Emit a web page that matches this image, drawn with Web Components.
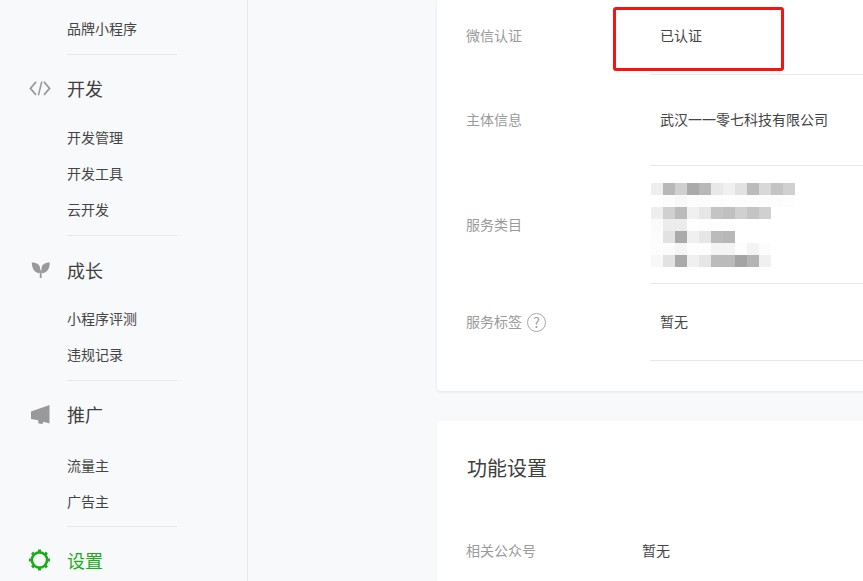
<!DOCTYPE html>
<html lang="zh">
<head>
<meta charset="utf-8">
<title>设置</title>
<style>
  html, body { margin: 0; height: 581px; overflow: hidden; background: #f8f9fb; }
  body {
    display: flex;
    font-family: "Noto Sans CJK SC", "Liberation Sans", sans-serif;
    font-size: 14px;
    color: #353535;
  }
</style>
</head>
<body>
  <side-nav>
    <nav-group top="10" pad="8">
      <nav-item>品牌小程序</nav-item>
    </nav-group>
    <nav-group title="开发" head="66" gap="-2" pad="8">
      <svg slot="icon" width="24" height="24" viewBox="0 0 24 24" fill="none" stroke="#999" stroke-width="1.7"><path d="M8 5.900 2.400 12.400 8 18.900M16 5.900l5.600 6.500-5.600 6.500"/><path d="M13.800 5.500 10.400 19.300" stroke-width="1.500"/></svg>
      <nav-item>开发管理</nav-item>
      <nav-item>开发工具</nav-item>
      <nav-item>云开发</nav-item>
    </nav-group>
    <nav-group title="成长" head="68" gap="-4" pad="8">
      <svg slot="icon" width="24" height="24" viewBox="0 0 24 24" fill="#999"><path d="M3.800 4.500c5.400 0 8.400 2.600 8.400 7 0 1.500-.3 2.800-.6 3.700C6.800 14.800 4 11.300 3.800 4.500z"/><path d="M21.800 4.500c-5.400 0-8.400 2.600-8.400 7 0 1.500.3 2.800.6 3.700 4.800-.4 7.600-3.900 7.800-10.700z"/><rect x="11.800" y="12" width="1.800" height="8"/></svg>
      <nav-item>小程序评测</nav-item>
      <nav-item>违规记录</nav-item>
    </nav-group>
    <nav-group title="推广" head="66" gap="0" pad="7">
      <svg slot="icon" width="24" height="24" viewBox="0 0 24 24" fill="#999"><path d="M3 9.500 21.500 3v18.500l-6-1.700-1 2.200-4-.6-.4-3.100L3 17z"/></svg>
      <nav-item>流量主</nav-item>
      <nav-item>广告主</nav-item>
    </nav-group>
    <nav-group title="设置" head="66" active last>
      <svg slot="icon" width="24" height="24" viewBox="0 0 24 24" fill="#1aad19">
        <circle cx="11.500" cy="12" r="7.600" fill="none" stroke="#1aad19" stroke-width="2.600"/>
        <rect x="10" y="1.500" width="3" height="3"/>
        <rect x="10" y="19.500" width="3" height="3"/>
        <rect x="1" y="10.500" width="3" height="3"/>
        <rect x="19" y="10.500" width="3" height="3"/>
        <rect x="10" y="1.500" width="3" height="3" transform="rotate(45 11.500 12)"/>
        <rect x="10" y="1.500" width="3" height="3" transform="rotate(135 11.500 12)"/>
        <rect x="10" y="1.500" width="3" height="3" transform="rotate(225 11.500 12)"/>
        <rect x="10" y="1.500" width="3" height="3" transform="rotate(315 11.500 12)"/>
      </svg>
    </nav-group>
  </side-nav>

  <main-pane>
    <info-card>
      <info-row label="微信认证" height="75" nudge="4" label-nudge="6">已认证</info-row>
      <info-row label="主体信息" height="91" nudge="2" label-nudge="4">武汉一一零七科技有限公司</info-row>
      <info-row label="服务类目" height="118" label-nudge="2"><mosaic-block></mosaic-block></info-row>
      <info-row label="服务标签" height="77" nudge="3" label-nudge="3" help>暂无</info-row>
    </info-card>
    <settings-card heading="功能设置">
      <plain-row label="相关公众号">暂无</plain-row>
    </settings-card>
    <red-mark></red-mark>
  </main-pane>

<script>
function shadow(el, html) {
  el.attachShadow({ mode: 'open' }).innerHTML = html;
}

customElements.define('side-nav', class extends HTMLElement {
  connectedCallback() {
    if (this.shadowRoot) return;
    shadow(this, `<style>
      :host { display: block; flex: none; width: 247px; height: 581px; overflow: hidden;
        border-right: 1px solid #e7e8ec; background: #f8f9fb; }
    </style><slot></slot>`);
  }
});

customElements.define('nav-group', class extends HTMLElement {
  connectedCallback() {
    if (this.shadowRoot) return;
    var title = this.getAttribute('title');
    this.removeAttribute('title');
    var gap = this.getAttribute('gap') || 0;
    var top = this.getAttribute('top') || 0;
    var pad = this.getAttribute('pad') || 0;
    var headH = this.getAttribute('head') || 66;
    var head = title ? `<div class="head"><span class="icon"><slot name="icon"></slot></span><span>${title}</span></div>` : '';
    shadow(this, `<style>
      :host { display: block; padding-left: 67px; }
      .head { display: flex; align-items: center; height: ${headH}px; margin-bottom: ${gap}px;
        font-size: 18px; color: #3e3e3e; position: relative; }
      .icon { position: absolute; left: -39px; top: calc(50% - 12px); width: 24px; height: 24px; }
      .list { width: 110px; padding: ${top}px 0 ${pad}px; border-bottom: 1px solid #e7e8ec; }
      :host([last]) .list { border: 0; padding: 0; }
      :host([active]) .head { color: #1aad19; }
      ::slotted(svg) { display: block; }
    </style>${head}<div class="list"><slot></slot></div>`);
  }
});

customElements.define('nav-item', class extends HTMLElement {
  connectedCallback() {
    if (this.shadowRoot) return;
    shadow(this, `<style>
      :host { display: block; height: 36px; line-height: 36px; font-size: 14px; color: #444; white-space: nowrap; }
    </style><slot></slot>`);
  }
});

customElements.define('main-pane', class extends HTMLElement {
  connectedCallback() {
    if (this.shadowRoot) return;
    shadow(this, `<style>
      :host { display: block; position: relative; flex: 1; min-width: 0; height: 581px; overflow: hidden;
        padding-left: 189px; box-sizing: border-box; }
    </style><slot></slot>`);
  }
});

customElements.define('info-card', class extends HTMLElement {
  connectedCallback() {
    if (this.shadowRoot) return;
    shadow(this, `<style>
      :host { display: block; background: #fff; margin-right: -20px; padding: 0 0 30px 29px;
        border-radius: 0 0 4px 4px; box-shadow: 0 1px 3px rgba(0,0,0,.09); }
    </style><slot></slot>`);
  }
});

customElements.define('info-row', class extends HTMLElement {
  connectedCallback() {
    if (this.shadowRoot) return;
    var h = this.getAttribute('height');
    var nudge = this.getAttribute('nudge') || 0;
    var labelNudge = this.getAttribute('label-nudge') || 0;
    var help = this.hasAttribute('help') ? '<help-icon></help-icon>' : '';
    shadow(this, `<style>
      :host { display: grid; grid-template-columns: 184px 1fr; height: ${h}px; font-size: 14px; }
      .label { display: flex; align-items: center; gap: 5px; color: #9a9a9a; padding-bottom: ${labelNudge}px; }
      .value { display: flex; align-items: center; padding: 0 0 ${nudge}px 10px;
        border-bottom: 1px solid #e7e7eb; color: #444; }
    </style><div class="label"><span>${this.getAttribute('label')}</span>${help}</div><div class="value"><slot></slot></div>`);
  }
});

customElements.define('help-icon', class extends HTMLElement {
  connectedCallback() {
    if (this.shadowRoot) return;
    shadow(this, `<style>
      :host { display: inline-flex; align-items: center; justify-content: center; width: 17px; height: 17px;
        border: 1px solid #a8a8a8; border-radius: 50%; font-size: 14px; line-height: 1; color: #a0a0a0; margin-top: 2px; }
    </style>?`);
  }
});

// blurred (mosaic) service categories, 12px cells
customElements.define('mosaic-block', class extends HTMLElement {
  connectedCallback() {
    if (this.shadowRoot) return;
    var rows = [
      ['eee','b8b8b8','d0d0d0','aaa','b8b8b8','e8e8e8','f0f0f0','e2e2e2','bbb','d8d8d8','c4c4c4','d0d0d0'],
      ['fff','fbfbfb','f8f8f8','fcfcfc','fcfcfc','fdfdfd','fdfdfd','fdfdfd','fdfdfd','fcfcfc','fcfcfc','fdfdfd'],
      ['eee','d0d0d0','bbb','f0f0f0','e6e6e6','c4c4c4','c0c0c0','d0d0d0','c4c4c4','d0d0d0'],
      ['fafafa','ececec','ececec','fff','fdfdfd','fdfdfd','fdfdfd'],
      ['fcfcfc','e2e2e2','aaa','f0f0f0','e6e6e6','bbb','b8b8b8'],
      ['fdfdfd','fbfbfb','f5f5f5','fdfdfd','fdfdfd','f4f4f4','f4f4f4','fdfdfd','f4f4f4','fcfcfc'],
      ['f8f8f8','e2e2e2','aaa','f0f0f0','e6e6e6','bbb','bbb','a4a4a4','b4b4b4','f0f0f0']
    ];
    var html = rows.map(function (r) {
      return '<div class="r">' + r.map(function (c) { return '<i style="background:#' + c + '"></i>'; }).join('') + '</div>';
    }).join('');
    shadow(this, `<style>
      :host { display: block; margin: 1px 0 0 -9px; }
      .r { display: flex; height: 12px; }
      i { display: block; width: 12px; height: 12px; }
      .r:first-child i:first-child { width: 7px; margin-left: 5px; border-radius: 6px 0 0 6px; }
      .r:first-child i:last-child { border-radius: 0 6px 6px 0; }
    </style>${html}`);
  }
});

customElements.define('settings-card', class extends HTMLElement {
  connectedCallback() {
    if (this.shadowRoot) return;
    shadow(this, `<style>
      :host { display: block; margin: 30px -20px 0 0; padding: 0 0 0 30px; background: #fff; height: 300px;
        border-radius: 4px; box-shadow: 0 1px 3px rgba(0,0,0,.05); }
      h2 { margin: 0; padding-top: 31px; height: 80px; line-height: 32px; font-size: 20px; font-weight: 400;
        color: #3e3e3e; }
    </style><h2>${this.getAttribute('heading')}</h2><slot></slot>`);
  }
});

customElements.define('plain-row', class extends HTMLElement {
  connectedCallback() {
    if (this.shadowRoot) return;
    shadow(this, `<style>
      :host { display: grid; grid-template-columns: 176px 1fr; margin-left: -1px; height: 36px; line-height: 36px; font-size: 14px; }
      .label { color: #9a9a9a; }
      .value { color: #444; }
    </style><div class="label">${this.getAttribute('label')}</div><div class="value"><slot></slot></div>`);
  }
});

// annotation drawn over the screenshot
customElements.define('red-mark', class extends HTMLElement {
  connectedCallback() {
    if (this.shadowRoot) return;
    shadow(this, `<style>
      :host { position: absolute; left: 365px; top: 7px; width: 171px; height: 64px; box-sizing: border-box;
        border: 3px solid #f8140e; border-radius: 3px; pointer-events: none; }
    </style>`);
  }
});
</script>
</body>
</html>
